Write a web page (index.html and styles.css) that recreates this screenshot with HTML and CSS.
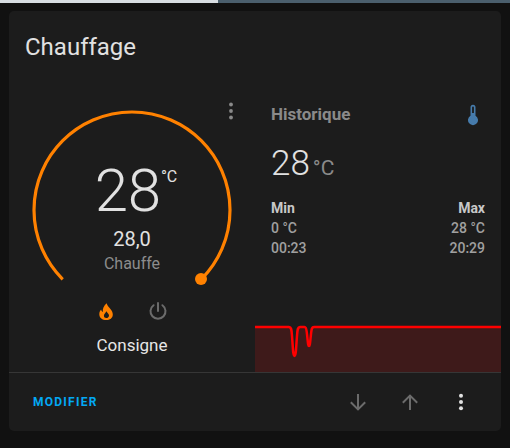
FILE: index.html
```html
<!DOCTYPE html>
<html lang="fr">
<head>
<meta charset="utf-8">
<title>Chauffage</title>
<link rel="stylesheet" href="styles.css">
</head>
<body>
<div class="topbar"><div class="topbar-fill"></div></div>
<main class="card">
  <h1 class="card-title">Chauffage</h1>
  <div class="content">
    <section class="thermostat">
      <div class="gauge">
        <svg class="gauge-svg" width="246" height="220" viewBox="0 0 246 220">
          <path class="gauge-arc" d="M53.7 198.3 A98 98 0 1 1 192.3 198.3"/>
          <circle class="gauge-dot" cx="192" cy="198" r="6"/>
        </svg>
        <svg class="menu-dots" width="4" height="18" viewBox="0 0 4 18">
          <circle cx="2" cy="2.5" r="1.9"/><circle cx="2" cy="9" r="1.9"/><circle cx="2" cy="15.5" r="1.9"/>
        </svg>
        <div class="readout">
          <div class="temp"><span class="temp-value">28</span><span class="temp-unit">°C</span></div>
          <div class="setpoint">28,0</div>
          <div class="state">Chauffe</div>
        </div>
      </div>
      <div class="modes">
        <svg class="mode-icon" width="24" height="24" viewBox="0 0 24 24"><path class="flame" d="M12.6 4.2C13.4 7 15 8 16.6 10.2 18 12 18.8 13.6 18.8 15.4 18.8 19 15.8 21 12.2 21 8.4 21 5.3 18.9 5.3 15.2 5.3 13.5 6.1 11.8 7.1 10.6 7.3 11.8 7.9 12.6 8.9 13 8.3 10 9.8 6.6 12.6 4.2ZM12.3 12.2C11.7 14 9.9 14.9 9.9 16.7 9.9 18 11 19 12.2 19 13.9 19 15 17.9 15 16.4 15 14.9 13.5 14 12.3 12.2Z" fill-rule="evenodd"/></svg>
        <svg class="mode-icon" width="24" height="24" viewBox="0 0 24 24"><path class="power" d="M12 4v8M16.4 6.2a7.5 7.5 0 1 1-8.8 0"/></svg>
      </div>
      <div class="consigne">Consigne</div>
    </section>
    <section class="history">
      <div class="history-body">
        <div class="history-head">
          <span class="history-title">Historique</span>
          <svg width="24" height="24" viewBox="0 0 24 24"><path class="thermo" fill-rule="evenodd" d="M9.5 5.2a2.5 2.5 0 0 1 5 0v8.6a5 5 0 1 1-5 0ZM11.1 5.4v5.6h1.8V5.4a.9.9 0 0 0-1.8 0Z"/></svg>
        </div>
        <div class="now"><span class="now-value">28</span><span class="now-unit">°C</span></div>
        <div class="stats">
          <div class="stat"><strong>Min</strong><span>0 °C</span><span>00:23</span></div>
          <div class="stat stat-right"><strong>Max</strong><span>28 °C</span><span>20:29</span></div>
        </div>
      </div>
      <svg class="chart" width="246" height="48" viewBox="0 0 246 48">
        <path class="chart-area" d="M0 3H34C36.5 3 36.5 6 37 12 38 24 38 32 39.5 32 41 32 41 24 42 12 42.5 6 42.5 3 45 3H49.5C51.5 3 51.5 6 52 10 53 19 53 22 54 22 55 22 55 19 56 10 56.5 6 56.5 3 59 3H246V48H0Z"/>
        <path class="chart-line" d="M0 3H34C36.5 3 36.5 6 37 12 38 24 38 32 39.5 32 41 32 41 24 42 12 42.5 6 42.5 3 45 3H49.5C51.5 3 51.5 6 52 10 53 19 53 22 54 22 55 22 55 19 56 10 56.5 6 56.5 3 59 3H246"/>
      </svg>
    </section>
  </div>
  <footer class="actions">
    <span class="modify">MODIFIER</span>
    <div class="action-icons">
      <svg width="24" height="24" viewBox="0 0 24 24"><path class="arrow" d="M12 4V19M4.8 12.2l7.2 7.2 7.2-7.2"/></svg>
      <svg width="24" height="24" viewBox="0 0 24 24"><path class="arrow" d="M12 20V5M4.8 12.8l7.2-7.2 7.2 7.2"/></svg>
      <svg width="24" height="24" viewBox="0 0 24 24"><g class="more"><circle cx="12" cy="5.8" r="2"/><circle cx="12" cy="12" r="2"/><circle cx="12" cy="18.2" r="2"/></g></svg>
    </div>
  </footer>
</main>
</body>
</html>
```
FILE: styles.css
```css
* { box-sizing: border-box; }
html, body { margin: 0; height: 100%; }
body {
  background: #111111;
  font-family: Roboto, "Liberation Sans", sans-serif;
  color: #e1e1e1;
  overflow: hidden;
}
.topbar { height: 3px; background: #4b5f6d; }
.topbar-fill { width: 218px; height: 100%; background: #d8dde2; }
.card {
  margin: 8px 9px 0;
  width: 492px;
  height: 420px;
  background: #1c1c1c;
  border-radius: 5px;
  display: flex;
  flex-direction: column;
  overflow: hidden;
}
.card-title {
  margin: 0;
  padding: 20px 16px 0;
  font-size: 24px;
  line-height: 32px;
  font-weight: 400;
  color: #e1e1e1;
  height: 70px;
}
.content { display: grid; grid-template-columns: 246px 246px; height: 291px; }
.thermostat { display: flex; flex-direction: column; align-items: center; }
.gauge { position: relative; width: 246px; height: 214px; flex: none; }
.gauge-svg { position: absolute; left: 0; top: 0; }
.gauge-arc { fill: none; stroke: #ff8100; stroke-width: 3.2; }
.gauge-dot { fill: #ff8100; }
.menu-dots { position: absolute; left: 220px; top: 21px; fill: #8a8a8a; }
.readout {
  position: absolute;
  left: 0;
  right: 0;
  top: 76px;
  display: flex;
  flex-direction: column;
  align-items: center;
}
.temp { display: flex; align-items: flex-start; margin-left: 8px; height: 68px; }
.temp-value { font-size: 60px; line-height: 68px; font-weight: 350; letter-spacing: -0.2px; color: #e1e1e1; }
.temp-unit { font-size: 16px; line-height: 20px; margin: 10px 0 0 0; font-weight: 400; color: #e1e1e1; }
.setpoint { font-size: 20px; line-height: 21px; margin-top: 4px; color: #e1e1e1; }
.state { font-size: 16px; line-height: 20px; color: #8c8c8c; margin-top: 4px; }
.modes { display: flex; justify-content: center; gap: 28px; margin-top: 4px; height: 24px; margin-left: -1px; }
.mode-icon { display: block; }
.flame { fill: #ff8100; }
.power { fill: none; stroke: #6b6b6b; stroke-width: 2; stroke-linecap: round; }
.consigne { font-size: 17px; line-height: 20px; font-weight: 400; margin-top: 12px; color: #e6e6e6; }
.history { display: flex; flex-direction: column; justify-content: space-between; }
.history-body { padding: 0 16px; }
.history-head { display: flex; justify-content: space-between; align-items: center; height: 24px; margin-top: 21px; }
.history-title { font-size: 17px; font-weight: 700; color: #8a8a8a; }
.thermo { fill: #467bab; }
.now { display: flex; align-items: baseline; margin-top: 18px; height: 40px; }
.now-value { font-size: 35px; line-height: 40px; font-weight: 300; color: #e1e1e1; }
.now-unit { font-size: 21px; margin-left: 3px; color: #8a8a8a; }
.stats { display: flex; justify-content: space-between; margin-top: 14px; font-size: 14px; line-height: 20px; font-weight: 500; color: #a0a0a0; }
.stat { display: flex; flex-direction: column; }
.stat strong { font-weight: 700; color: #c8c8c8; line-height: 20px; }
.stat-right { text-align: right; }
.chart { display: block; flex: none; }
.chart-area { fill: #3e1a1a; stroke: none; }
.chart-line { fill: none; stroke: #ff0000; stroke-width: 2.5; }
.actions {
  border-top: 1px solid #363636;
  flex: 1;
  display: flex;
  align-items: center;
  justify-content: space-between;
  padding: 0 28px 0 24px;
}
.modify { font-size: 12px; font-weight: 700; letter-spacing: 1.25px; color: #03a9f4; }
.action-icons { display: flex; gap: 27px; height: 24px; }
.action-icons svg { display: block; }
.action-icons svg:first-child { margin-right: 1px; }
.arrow { fill: none; stroke: #6b6b6b; stroke-width: 2; }
.more { fill: #e1e1e1; }
```
